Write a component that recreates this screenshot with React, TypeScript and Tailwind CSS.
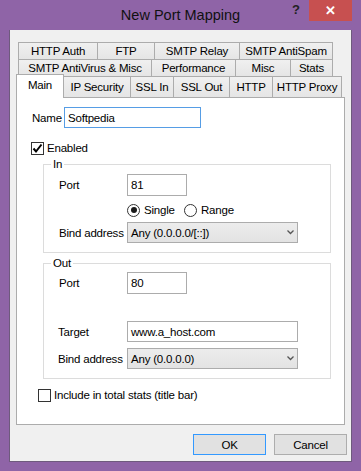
import React from 'react';

const rowOne = [
  { label: 'HTTP Auth', w: 'w-[80px]' },
  { label: 'FTP', w: 'w-[57px]' },
  { label: 'SMTP Relay', w: 'w-[85px]' },
  { label: 'SMTP AntiSpam', w: 'w-[93px]' },
];

const rowTwo = [
  { label: 'SMTP AntiVirus & Misc', w: 'w-[134px]' },
  { label: 'Performance', w: 'w-[84px]' },
  { label: 'Misc', w: 'w-[55px]' },
  { label: 'Stats', w: 'w-[42px]' },
];

const rowThree = [
  { label: 'IP Security', w: 'w-[67px]' },
  { label: 'SSL In', w: 'w-[43px]' },
  { label: 'SSL Out', w: 'w-[56px]' },
  { label: 'HTTP', w: 'w-[43px]' },
  { label: 'HTTP Proxy', w: 'w-[69px]' },
];

const Tab = ({ label, w, first, h }: { label: string; w: string; first: boolean; h: string }) => (
  <div
    className={`${w} ${h} flex items-center justify-center border-y border-r border-[#acacac] bg-linear-to-b from-[#f0f0f0] to-[#e5e5e5] ${
      first ? 'border-l' : ''
    }`}
  >
    {label}
  </div>
);

const CheckBox = ({ checked }: { checked?: boolean }) => (
  <div className="flex h-[13px] w-[13px] items-center justify-center border border-[#333] bg-white">
    {checked && (
      <svg width="11" height="11" viewBox="0 0 11 11">
        <path d="M1.5 5.5 L4 8.5 L9.5 1.5" fill="none" stroke="#000" strokeWidth="2" />
      </svg>
    )}
  </div>
);

const Radio = ({ checked }: { checked?: boolean }) => (
  <div className="flex h-[13px] w-[13px] items-center justify-center rounded-full border border-[#333] bg-white">
    {checked && <div className="h-[6px] w-[6px] rounded-full bg-[#1a1a1a]" />}
  </div>
);

const Select = ({ value }: { value: string }) => (
  <div className="flex h-[21px] w-[171px] items-center justify-between border border-[#acacac] bg-linear-to-b from-[#ececec] to-[#e3e3e3] pl-[3px] pr-[3px]">
    <span>{value}</span>
    <svg width="7" height="5" viewBox="0 0 7 5">
      <path d="M0.5 0.5 L3.5 3.5 L6.5 0.5" fill="none" stroke="#555" strokeWidth="1.3" />
    </svg>
  </div>
);

const Group = ({ title, h, children }: { title: string; h: string; children: React.ReactNode }) => (
  <div className={`relative ml-[26px] w-[288px] ${h} border border-[#dcdcdc]`}>
    <span className="absolute -top-[8px] left-[7px] bg-white px-[2px] leading-[14px]">{title}</span>
    {children}
  </div>
);

export default function App() {
  return (
    <div className="flex h-[471px] w-[361px] flex-col bg-[#8f64a7] font-['Liberation_Sans',Arial,sans-serif] text-[11.5px] leading-[14px] tracking-[-0.2px] text-black">
      <div className="relative flex h-[30px] items-center justify-center">
        <span className="text-[14.5px] leading-[18px] tracking-normal text-[#111]">New Port Mapping</span>
        <span className="absolute left-[292px] top-[3px] text-[13px] font-bold text-[#222]">?</span>
        <div className="absolute right-[9px] top-0 flex h-[21px] w-[43px] items-center justify-center bg-[#c75050] text-[13px] font-bold text-white">
          ✕
        </div>
      </div>

      <div className="ml-[9px] flex h-[432px] w-[343px] flex-col border-x border-b border-[#6e5a7d] bg-[#f0f0f0] pl-[6px] pt-[12px]">
        <div className="ml-[2px] flex">
          {rowOne.map((t, i) => (
            <Tab key={t.label} label={t.label} w={t.w} first={i === 0} h="h-[18px]" />
          ))}
        </div>
        <div className="-mt-px ml-[2px] flex">
          {rowTwo.map((t, i) => (
            <Tab key={t.label} label={t.label} w={t.w} first={i === 0} h="h-[18px]" />
          ))}
        </div>
        <div className="relative z-10 -mt-[3px] flex h-[24px] items-end">
          <div className="flex h-[24px] w-[48px] items-center justify-center border-x border-t border-[#acacac] bg-white pb-[4px]">
            Main
          </div>
          {rowThree.map((t) => (
            <Tab key={t.label} label={t.label} w={t.w} first={false} h="h-[22px]" />
          ))}
        </div>

        <div className="-mt-px flex h-[328px] w-[329px] flex-col border border-[#acacac] bg-white">
          <div className="flex items-center pl-[15px] pt-[9px]">
            <span className="w-[32px]">Name</span>
            <div className="flex h-[21px] w-[137px] items-center border border-[#569de5] px-[3px]">Softpedia</div>
          </div>

          <div className="mt-[13px] flex items-center gap-[3px] pl-[14px]">
            <CheckBox checked />
            <span>Enabled</span>
          </div>

          <div className="mt-[9px]">
            <Group title="In" h="h-[89px]">
              <div className="flex items-center pl-[15px] pt-[9px]">
                <span className="w-[68px]">Port</span>
                <div className="flex h-[22px] w-[60px] items-center border border-[#acacac] px-[3px]">81</div>
              </div>
              <div className="mt-[7px] flex items-center pl-[83px]">
                <div className="flex w-[57px] items-center gap-[4px]">
                  <Radio checked />
                  <span>Single</span>
                </div>
                <div className="flex items-center gap-[4px]">
                  <Radio />
                  <span>Range</span>
                </div>
              </div>
              <div className="mt-[5px] flex items-center pl-[15px]">
                <span className="w-[68px]">Bind address</span>
                <Select value="Any (0.0.0.0/[::])" />
              </div>
            </Group>
          </div>

          <div className="mt-[10px]">
            <Group title="Out" h="h-[116px]">
              <div className="flex items-center pl-[15px] pt-[8px]">
                <span className="w-[68px]">Port</span>
                <div className="flex h-[22px] w-[60px] items-center border border-[#acacac] px-[3px]">80</div>
              </div>
              <div className="mt-[27px] flex items-center pl-[14px]">
                <span className="w-[69px]">Target</span>
                <div className="flex h-[21px] w-[171px] items-center border border-[#acacac] px-[3px]">
                  www.a_host.com
                </div>
              </div>
              <div className="mt-[6px] flex items-center pl-[14px]">
                <span className="w-[69px]">Bind address</span>
                <Select value="Any (0.0.0.0)" />
              </div>
            </Group>
          </div>

          <div className="mt-[9px] flex items-center gap-[3px] pl-[21px]">
            <CheckBox />
            <span>Include in total stats (title bar)</span>
          </div>
        </div>

        <div className="ml-[177px] mt-[9px] flex gap-[8px]">
          <div className="flex h-[21px] w-[73px] items-center justify-center border border-[#3399ff] bg-[#e1e1e1]">OK</div>
          <div className="flex h-[21px] w-[73px] items-center justify-center border border-[#adadad] bg-[#e1e1e1]">
            Cancel
          </div>
        </div>
      </div>
    </div>
  );
}
